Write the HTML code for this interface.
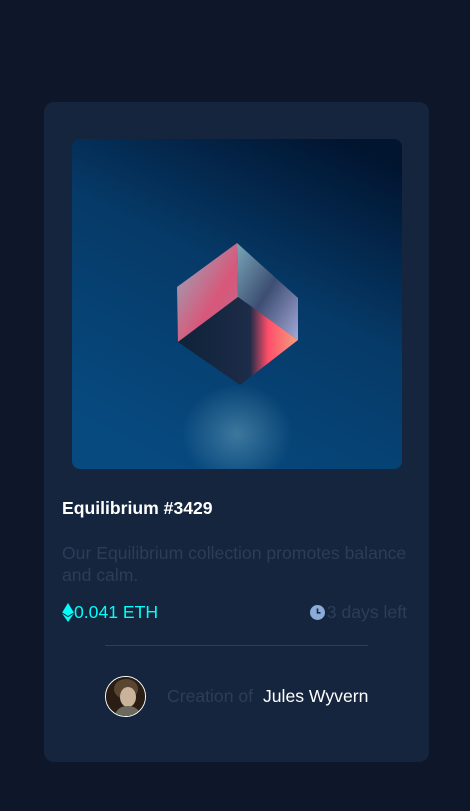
<!DOCTYPE html>
<html><head><meta charset="utf-8"><style>
*{margin:0;padding:0;box-sizing:border-box}
body{width:470px;height:811px;background:#0e1729;font-family:"Liberation Sans",sans-serif;position:relative;overflow:hidden}
.card{position:absolute;left:44px;top:102px;width:385px;height:660px;background:#15253e;border-radius:10px}
.img{position:absolute;left:28px;top:37px;width:330px;height:330px;border-radius:8px;overflow:hidden}
.t{position:absolute;left:18px;top:396px;color:#fff;font-weight:bold;font-size:17.6px}
.d{position:absolute;left:18px;top:440px;width:350px;color:#2b3d57;font-size:17.6px;line-height:22px}
.eth{position:absolute;left:18px;top:500px;color:#00fff8;font-size:17.6px;display:flex;align-items:center}
.days{position:absolute;right:22px;top:500px;color:#2b3d57;font-size:17.6px;display:flex;align-items:center}
.hr{position:absolute;left:61px;top:543px;width:263px;height:1px;background:#2e3f58}
.av{position:absolute;left:61px;top:574px;width:41px;height:41px;border-radius:50%;border:1.5px solid #fff;overflow:hidden;background:#2a1d14}
.cr{position:absolute;left:123px;top:584px;color:#2b3d57;font-size:17.6px}
.cr b{color:#fff;font-weight:normal;margin-left:5px}
</style></head><body>
<div class="card">
 <div class="img">
  <svg width="330" height="330" viewBox="0 0 330 330">
   <defs>
    <linearGradient id="bg" x1="0.8" y1="0" x2="0.3" y2="1">
     <stop offset="0" stop-color="#011531"/><stop offset="0.45" stop-color="#063a68"/><stop offset="1" stop-color="#074a80"/>
    </linearGradient>
    <radialGradient id="refl" cx="0.5" cy="0.5" r="0.5">
     <stop offset="0" stop-color="#7fb4cc" stop-opacity="0.45"/><stop offset="1" stop-color="#7fb4cc" stop-opacity="0"/>
    </radialGradient>
    <linearGradient id="fa" x1="0" y1="0" x2="1" y2="1">
     <stop offset="0" stop-color="#8fb0c0"/><stop offset="0.6" stop-color="#d8577a"/><stop offset="1" stop-color="#c06a8c"/>
    </linearGradient>
    <linearGradient id="fb" x1="0" y1="0" x2="1" y2="1">
     <stop offset="0" stop-color="#7aa7b8"/><stop offset="0.5" stop-color="#3d4e72"/><stop offset="1" stop-color="#a5a8d8"/>
    </linearGradient>
    <linearGradient id="fc" x1="0" y1="0" x2="1" y2="0">
     <stop offset="0" stop-color="#0e2238"/><stop offset="0.6" stop-color="#1d2c48"/><stop offset="0.75" stop-color="#ff4e6a"/><stop offset="1" stop-color="#f2a080"/>
    </linearGradient>
   </defs>
   <rect width="330" height="330" fill="url(#bg)"/>
   <ellipse cx="165" cy="295" rx="55" ry="50" fill="url(#refl)"/>
   <polygon points="165,104 105,148 106,203 166,158" fill="url(#fa)"/>
   <polygon points="165,104 226,159 226,201 166,158" fill="url(#fb)"/>
   <polygon points="106,203 166,158 226,201 168,246" fill="url(#fc)"/>
  </svg>
 </div>
 <div class="t">Equilibrium #3429</div>
 <div class="d">Our Equilibrium collection promotes balance and calm.</div>
 <div class="eth"><svg width="12" height="19" viewBox="0 0 11 18"><path d="M5.5 0L0 9l5.5 3.3L11 9z" fill="#00fff8"/><path d="M5.5 13.4L0 10.1 5.5 18 11 10.1z" fill="#00fff8"/></svg>0.041 ETH</div>
 <div class="days"><svg width="15" height="15" viewBox="0 0 15 15" style="margin-right:2px"><circle cx="7.5" cy="7.5" r="7.5" fill="#8bacd9"/><path d="M7.5 3.5v4.3h3" stroke="#15253e" stroke-width="1.6" fill="none"/></svg>3 days left</div>
 <div class="hr"></div>
 <div class="av"><svg width="41" height="41" viewBox="0 0 41 41"><rect width="41" height="41" fill="#2a1d14"/><ellipse cx="20" cy="12" rx="12" ry="10" fill="#5a4630"/><ellipse cx="22" cy="20" rx="8" ry="10" fill="#c9b39a"/><path d="M8 41c2-10 8-12 14-12s12 3 14 12z" fill="#6b6a5c"/></svg></div>
 <div class="cr">Creation of <b>Jules Wyvern</b></div>
</div>
</body></html>
